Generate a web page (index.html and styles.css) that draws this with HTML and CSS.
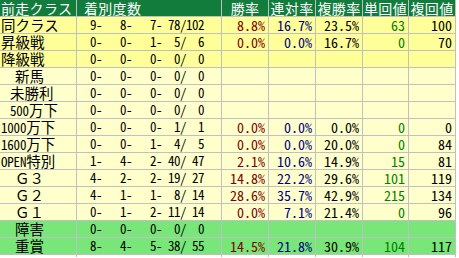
FILE: index.html
```html
<!DOCTYPE html>
<html lang="ja">
<head>
<meta charset="utf-8">
<link rel="stylesheet" href="styles.css">
</head>
<body>
<div class="sheet">
  <div class="row hd">
    <div class="c lbl">前走クラス</div>
    <div class="c cnt-h">着別度数</div>
    <div class="c h">勝率</div>
    <div class="c h">連対率</div>
    <div class="c h">複勝率</div>
    <div class="c h">単回値</div>
    <div class="c h">複回値</div>
  </div>

  <div class="row y">
    <div class="c lbl">同クラス</div>
    <div class="c cnt"> 9-   8-   7- 78/102</div>
    <div class="c v win">8.8%</div><div class="c v ren">16.7%</div><div class="c v fuku">23.5%</div><div class="c v tan">63</div><div class="c v fk">100</div>
  </div>
  <div class="row y">
    <div class="c lbl">昇級戦</div>
    <div class="c cnt"> 0-   0-   1-  5/  6</div>
    <div class="c v win">0.0%</div><div class="c v ren">0.0%</div><div class="c v fuku">16.7%</div><div class="c v tan">0</div><div class="c v fk">70</div>
  </div>
  <div class="row y">
    <div class="c lbl">降級戦</div>
    <div class="c cnt"> 0-   0-   0-  0/  0</div>
    <div class="c v"></div><div class="c v"></div><div class="c v"></div><div class="c v"></div><div class="c v"></div>
  </div>

  <div class="row p">
    <div class="c lbl ind2">新馬</div>
    <div class="c cnt"> 0-   0-   0-  0/  0</div>
    <div class="c v"></div><div class="c v"></div><div class="c v"></div><div class="c v"></div><div class="c v"></div>
  </div>
  <div class="row p">
    <div class="c lbl ind1">未勝利</div>
    <div class="c cnt"> 0-   0-   0-  0/  0</div>
    <div class="c v"></div><div class="c v"></div><div class="c v"></div><div class="c v"></div><div class="c v"></div>
  </div>
  <div class="row p">
    <div class="c lbl ind1"><span class="n">500</span>万下</div>
    <div class="c cnt"> 0-   0-   0-  0/  0</div>
    <div class="c v"></div><div class="c v"></div><div class="c v"></div><div class="c v"></div><div class="c v"></div>
  </div>
  <div class="row p">
    <div class="c lbl"><span class="n">1000</span>万下</div>
    <div class="c cnt"> 0-   0-   0-  1/  1</div>
    <div class="c v win">0.0%</div><div class="c v ren">0.0%</div><div class="c v fuku">0.0%</div><div class="c v tan">0</div><div class="c v fk">0</div>
  </div>
  <div class="row p">
    <div class="c lbl"><span class="n">1600</span>万下</div>
    <div class="c cnt"> 0-   0-   1-  4/  5</div>
    <div class="c v win">0.0%</div><div class="c v ren">0.0%</div><div class="c v fuku">20.0%</div><div class="c v tan">0</div><div class="c v fk">84</div>
  </div>
  <div class="row p">
    <div class="c lbl"><span class="n">OPEN</span>特別</div>
    <div class="c cnt"> 1-   4-   2- 40/ 47</div>
    <div class="c v win">2.1%</div><div class="c v ren">10.6%</div><div class="c v fuku">14.9%</div><div class="c v tan">15</div><div class="c v fk">81</div>
  </div>
  <div class="row p">
    <div class="c lbl ind2">Ｇ３</div>
    <div class="c cnt"> 4-   2-   2- 19/ 27</div>
    <div class="c v win">14.8%</div><div class="c v ren">22.2%</div><div class="c v fuku">29.6%</div><div class="c v tan">101</div><div class="c v fk">119</div>
  </div>
  <div class="row p">
    <div class="c lbl ind2">Ｇ２</div>
    <div class="c cnt"> 4-   1-   1-  8/ 14</div>
    <div class="c v win">28.6%</div><div class="c v ren">35.7%</div><div class="c v fuku">42.9%</div><div class="c v tan">215</div><div class="c v fk">134</div>
  </div>
  <div class="row p">
    <div class="c lbl ind2">Ｇ１</div>
    <div class="c cnt"> 0-   1-   2- 11/ 14</div>
    <div class="c v win">0.0%</div><div class="c v ren">7.1%</div><div class="c v fuku">21.4%</div><div class="c v tan">0</div><div class="c v fk">96</div>
  </div>

  <div class="row g">
    <div class="c lbl ind2">障害</div>
    <div class="c cnt"> 0-   0-   0-  0/  0</div>
    <div class="c v"></div><div class="c v"></div><div class="c v"></div><div class="c v"></div><div class="c v"></div>
  </div>
  <div class="row g">
    <div class="c lbl ind2">重賞</div>
    <div class="c cnt"> 8-   4-   5- 38/ 55</div>
    <div class="c v win">14.5%</div><div class="c v ren">21.8%</div><div class="c v fuku">30.9%</div><div class="c v tan">104</div><div class="c v fk">117</div>
  </div>

  <div class="row w">
    <div class="c"></div><div class="c"></div><div class="c"></div><div class="c"></div><div class="c"></div><div class="c"></div><div class="c"></div>
  </div>
</div>
</body>
</html>
```

FILE: styles.css
```css
html, body {
  margin: 0;
  padding: 0;
  background: #ffffff;
}

body {
  width: 459px;
  height: 258px;
  overflow: hidden;
}

.sheet {
  display: grid;
  grid-template-columns: 76px 144px 46px 46px 46px 45px 46px;
  grid-template-rows: repeat(15, 16px) 2px;
  gap: 1px;
  padding: 0 1px 0 0;
  width: max-content;
  background: #c0c0c0;
  font-family: "Noto Sans CJK JP", "Noto Sans", sans-serif;
  font-size: 14.5px;
  color: #000000;
}

.row {
  display: contents;
}

.c {
  line-height: 16px;
  white-space: pre;
}

.hd .c {
  background: #127c3c;
  color: #ffffff;
  font-size: 14px;
  letter-spacing: 0.3px;
}

.y .c { background: #ffff99; }
.p .c { background: #ffffcc; }
.g .c { background: #78e678; }
.w .c { background: #ffffff; }

.lbl {
  padding-left: 1px;
}

.ind1 { padding-left: 10px; }
.ind2 { padding-left: 15px; }

.n {
  font-family: "Noto Sans Mono CJK JP", "Liberation Mono", monospace;
  font-size: 13px;
  letter-spacing: -0.2px;
}

.cnt-h {
  padding-left: 7px;
}

.h {
  text-align: center;
}

.cnt {
  font-family: "Noto Sans Mono CJK JP", "Liberation Mono", monospace;
  font-size: 13px;
  letter-spacing: -0.5px;
  text-align: right;
  padding-right: 17px;
}

.v {
  font-family: "Noto Sans Mono CJK JP", "Liberation Mono", monospace;
  font-size: 14px;
  text-align: right;
  padding-right: 3px;
}

.win { color: #800000; }
.ren { color: #000080; }
.fuku { color: #000000; }
.tan { color: #008000; }
.fk { color: #000000; }
```
